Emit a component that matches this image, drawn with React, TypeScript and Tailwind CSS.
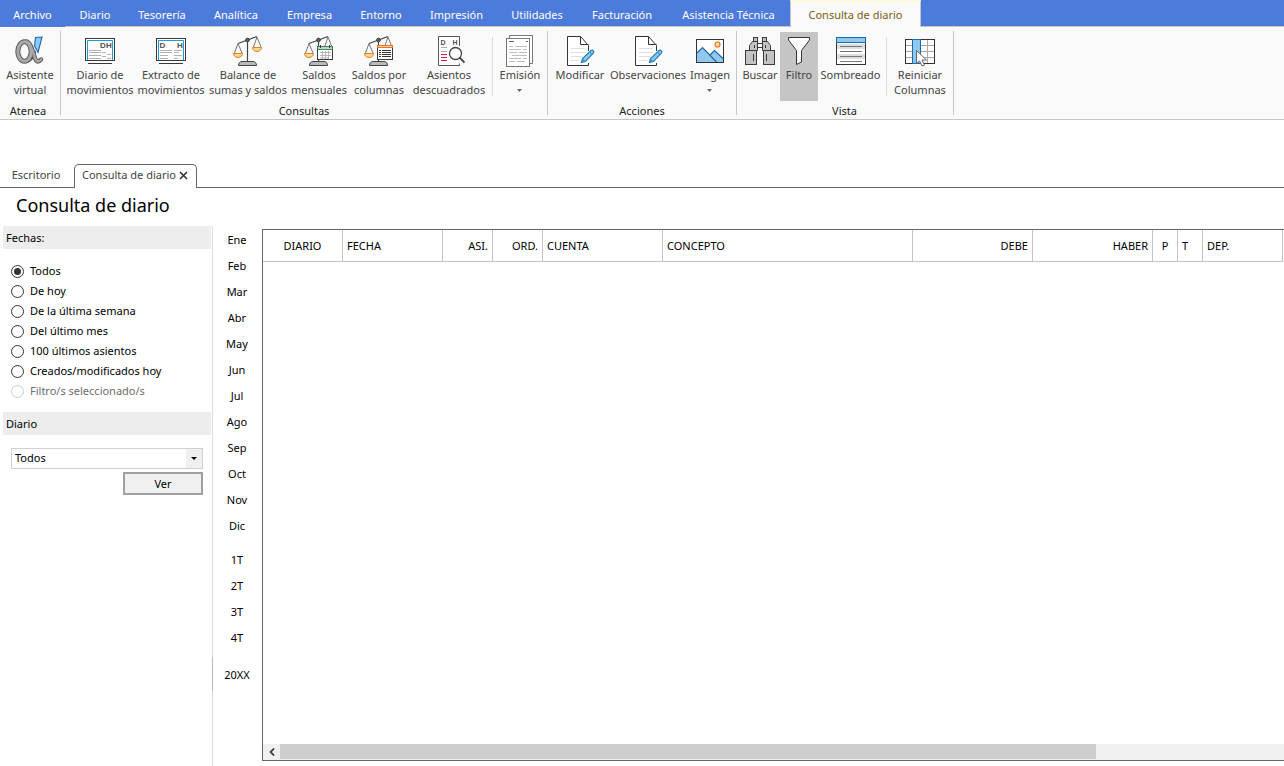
import React, { useState } from 'react';
import clsx from 'clsx';

interface RibbonItem {
  id: string;
  lines: string[];
  icon: React.ReactNode;
  width: string;
  dropdown?: boolean;
  active?: boolean;
  separatorBefore?: boolean;
}

interface RibbonGroupProps {
  title: string;
  items: RibbonItem[];
  className: string;
}

const MENU_ITEMS = [
  { label: 'Archivo', width: 'w-[65px]' },
  { label: 'Diario', width: 'w-[60px]' },
  { label: 'Tesorería', width: 'w-[74px]' },
  { label: 'Analítica', width: 'w-[74px]' },
  { label: 'Empresa', width: 'w-[73px]' },
  { label: 'Entorno', width: 'w-[70px]' },
  { label: 'Impresión', width: 'w-[81px]' },
  { label: 'Utilidades', width: 'w-[80px]' },
  { label: 'Facturación', width: 'w-[90px]' },
  { label: 'Asistencia Técnica', width: 'w-[123px]' },
];

const DATE_FILTERS = [
  { id: 'todos', label: 'Todos' },
  { id: 'hoy', label: 'De hoy' },
  { id: 'semana', label: 'De la última semana' },
  { id: 'mes', label: 'Del último mes' },
  { id: 'cien', label: '100 últimos asientos' },
  { id: 'creados', label: 'Creados/modificados hoy' },
  { id: 'filtros', label: 'Filtro/s seleccionado/s', disabled: true },
];

const MONTHS = ['Ene', 'Feb', 'Mar', 'Abr', 'May', 'Jun', 'Jul', 'Ago', 'Sep', 'Oct', 'Nov', 'Dic'];
const QUARTERS = ['1T', '2T', '3T', '4T'];

const COLUMNS = [
  { label: 'DIARIO', style: 'w-[80px] text-center' },
  { label: 'FECHA', style: 'w-[100px] text-left' },
  { label: 'ASI.', style: 'w-[50px] text-right' },
  { label: 'ORD.', style: 'w-[50px] text-right' },
  { label: 'CUENTA', style: 'w-[120px] text-left' },
  { label: 'CONCEPTO', style: 'w-[250px] text-left' },
  { label: 'DEBE', style: 'w-[120px] text-right' },
  { label: 'HABER', style: 'w-[120px] text-right' },
  { label: 'P', style: 'w-[25px] text-center' },
  { label: 'T', style: 'w-[25px] text-left' },
  { label: 'DEP.', style: 'w-[80px] text-left' },
];

const Icon = ({ children }: { children: React.ReactNode }) => (
  <svg width="32" height="32" viewBox="0 0 32 32" fill="none" aria-hidden="true" className="shrink-0">
    {children}
  </svg>
);

// Assistant logo: grey loop with a tail and a blue blade
const AlphaIcon = () => (
  <Icon>
    <path d="M21.5 2.5 L28 2 L24 17.5 L20.5 11 Z" fill="#90c8f0" stroke="#1468b4" strokeWidth="1.1" />
    <g strokeLinecap="round">
      <ellipse cx="10.5" cy="16.5" rx="6.7" ry="9.7" stroke="#5c5c5c" strokeWidth="5" />
      <path d="M13 6.5 C17 8 18.5 15 20 20 C21.5 26 23.5 28.5 27 24.5" stroke="#5c5c5c" strokeWidth="4.4" />
      <path d="M20.5 17 C19.5 21 17 25 14 26" stroke="#5c5c5c" strokeWidth="3" />
      <ellipse cx="10.5" cy="16.5" rx="6.7" ry="9.7" stroke="#a9a9a9" strokeWidth="3" />
      <path d="M13 6.5 C17 8 18.5 15 20 20 C21.5 26 23.5 28.5 27 24.5" stroke="#a9a9a9" strokeWidth="2.4" />
    </g>
  </Icon>
);

const LedgerIcon = ({ split }: { split?: boolean }) => (
  <Icon>
    <rect x="1.5" y="3.5" width="29" height="22" fill="#fff" stroke="#3a3a3a" />
    <path d="M3.5 25 V5.5 H28.5 V25" stroke="#1a9ad6" />
    <path d="M4 28.5 H28" stroke="#3a3a3a" />
    <g fontFamily="Liberation Sans, sans-serif" fontSize="8" fontWeight="700" fill="#505050">
      <text x={split ? 4.5 : 16} y="13">D</text>
      <text x="22" y="13">H</text>
    </g>
    <path
      d={
        split
          ? 'M5 15.5 H17 M5 17.5 H17 M5 20.5 H13 M5 23.5 H13 M19 15.5 H27 M19 17.5 H24 M19 20.5 H27 M19 23.5 H23'
          : 'M5 15.5 H17 M5 17.5 H17 M5 20.5 H17 M5 23.5 H17 M18 17.5 H22 M18 21.5 H22 M23 19.5 H27 M23 23.5 H27'
      }
      stroke="#b0b0b0"
    />
  </Icon>
);

const Scale = () => (
  <g>
    <path d="M15.5 7 V27" stroke="#444" strokeWidth="1.2" />
    <path d="M6 8.5 L25 1.5" stroke="#444" strokeWidth="1.3" />
    <path d="M6 8.5 L2.5 18 M6 8.5 L10 18 M25 2 L21.5 12 M25 2 L29 12" stroke="#777" />
    <path d="M1.5 18.5 H10.5 C10.5 20.5 9 22.5 6 22.5 C3 22.5 1.5 20.5 1.5 18.5 Z" fill="#ffd78c" stroke="#e8832b" />
    <path d="M20.5 12.5 H29.5 C29.5 14.5 28 16.5 25 16.5 C22 16.5 20.5 14.5 20.5 12.5 Z" fill="#ffd78c" stroke="#e8832b" />
    <circle cx="15.5" cy="5" r="1.8" fill="#666" stroke="#333" />
    <path d="M6.5 30.5 C6.5 28 8 26.5 10 26.5 H21 C23 26.5 24.5 28 24.5 30.5 Z" fill="#b9b9b9" stroke="#444" />
  </g>
);

const BalanceIcon = () => (
  <Icon>
    <Scale />
  </Icon>
);

const MonthlyIcon = () => (
  <Icon>
    <Scale />
    <rect x="14.5" y="12.5" width="15" height="12" fill="#fff" stroke="#3a3a3a" />
    <rect x="14.5" y="11.5" width="15" height="3" fill="#b4ddc3" stroke="#2f6d48" strokeWidth="0.8" />
    <path d="M17.5 10 V13 M26.5 10 V13" stroke="#3a3a3a" />
    <path d="M17 17.5 H28 M17 20.5 H28 M17 23 H25 M19.5 16 V24 M22.5 16 V24 M25.5 16 V24" stroke="#b5b5b5" />
  </Icon>
);

const ColumnsBalanceIcon = () => (
  <Icon>
    <Scale />
    <rect x="14.5" y="10.5" width="15" height="14" fill="#fff" stroke="#3a3a3a" />
    <rect x="14.5" y="10.5" width="15" height="2" fill="#ffd0a0" stroke="#e8732b" />
    <path d="M16 15.5 H18 M16 17.5 H18 M16 19.5 H18 M16 21.5 H18 M19 15.5 H28 M19 17.5 H28 M19 19.5 H28 M19 21.5 H28" stroke="#333" />
  </Icon>
);

const MismatchIcon = () => (
  <Icon>
    <path d="M26.5 11 V1.5 H5.5 V30.5 H26.5 V28.5" fill="#fff" stroke="#555" />
    <g fontFamily="Liberation Sans, sans-serif" fontSize="7" fontWeight="700" fill="#505050">
      <text x="7.5" y="10">D</text>
      <text x="19.5" y="10">H</text>
    </g>
    <path d="M8 12.5 H14 M8 16.5 H14" stroke="#b0b0b0" />
    <path d="M8 19.5 H14 M8 22.5 H14 M8 25.5 H14" stroke="#dc143c" />
    <circle cx="22.5" cy="18.5" r="6" fill="#fff" stroke="#444" strokeWidth="1.3" />
    <path d="M26.5 22.5 L31.5 27.5" stroke="#444" strokeWidth="1.8" />
  </Icon>
);

const PrintIcon = () => (
  <Icon>
    <path d="M5.5 3 V0.5 H28.5 V28.5 H26" fill="#fff" stroke="#777" />
    <rect x="2.5" y="3.5" width="23" height="28" fill="#fff" stroke="#777" />
    <path d="M5 6.5 H10 M22 6.5 H24" stroke="#666" />
    <path d="M5 11.5 H9 M11 11.5 H23 M5 14.5 H17 M19 14.5 H23 M5 17.5 H13 M15 17.5 H23 M8 20.5 H23 M5 23.5 H17 M19 23.5 H23 M5 26.5 H11 M13 26.5 H21" stroke="#bdbdbd" />
  </Icon>
);

const EditDocIcon = () => (
  <Icon>
    <path d="M24.5 16 V10.5 L16.5 1.5 H3.5 V30.5 H24.5 V28" fill="#fff" stroke="#333" />
    <path d="M16.5 1.5 V9.5 H24.5" stroke="#333" />
    <path d="M7 13.5 H21 M7 17.5 H21 M7 21.5 H18 M7 25.5 H15" stroke="#dedede" />
    <path d="M17.5 27.5 L18.5 23.5 L27 15.5 C29 14.5 30.5 16.5 29.5 18 L21.5 26.5 Z" fill="#8cc8ee" stroke="#2280c0" strokeWidth="1.2" />
    <path d="M19 24.5 L20.5 26 M17.5 27.5 L20 25 M25.5 17 L28 19.5" stroke="#2280c0" />
  </Icon>
);

const ImageIcon = () => (
  <Icon>
    <rect x="2.5" y="4.5" width="27" height="23" fill="#fff" />
    <path d="M3 18 L8.5 12.5 L16 20 L20.5 15.5 L29 23 V27 H3 Z" fill="#90c8ef" />
    <path d="M3 18 L8.5 12.5 L22.5 27 M16 20 L20.5 15.5 L29 23.5" stroke="#1d69ab" strokeWidth="1.2" />
    <circle cx="23.5" cy="9.5" r="2.5" fill="#ffd78c" stroke="#e8732b" strokeWidth="1.2" />
    <rect x="2.5" y="4.5" width="27" height="23" stroke="#333" />
  </Icon>
);

const BinocularsIcon = () => (
  <Icon>
    <g fill="#c3c3c3" stroke="#3a3a3a">
      <rect x="9.5" y="2.5" width="4" height="4" />
      <rect x="18.5" y="2.5" width="4" height="4" />
      <rect x="13.5" y="8.5" width="5" height="4" fill="#fff" />
      <path d="M5.5 15.5 V10.5 L8.5 6.5 H13.5 V15.5 Z" />
      <path d="M26.5 15.5 V10.5 L23.5 6.5 H18.5 V15.5 Z" />
      <rect x="1.5" y="15.5" width="11" height="14" />
      <rect x="19.5" y="15.5" width="11" height="14" />
    </g>
    <path d="M9.5 19 V26 M22.5 19 V26 M10.5 10 V13 M21.5 10 V13" stroke="#3a3a3a" />
  </Icon>
);

const FunnelIcon = () => (
  <Icon>
    <path d="M5.5 2.5 H26.5 V5 L18.5 15.5 V27 L13.5 29.5 V15.5 L5.5 5 Z" fill="#fff" stroke="#333" />
  </Icon>
);

const ShadingIcon = () => (
  <Icon>
    <rect x="1.5" y="2.5" width="29" height="27" fill="#fff" stroke="#333" />
    <path d="M2 9 H30 V14 H2 Z M2 19 H30 V24 H2 Z" fill="#dedede" />
    <path d="M5 11.5 H27 M5 16.5 H27 M5 21.5 H27 M5 26.5 H27" stroke="#777" />
    <rect x="1.5" y="2.5" width="29" height="5" fill="#90c8ef" stroke="#1d69ab" />
  </Icon>
);

const ResetColumnsIcon = () => (
  <Icon>
    <rect x="1.5" y="4.5" width="29" height="24" fill="#fff" />
    <path d="M2 10.5 H30 M2 16.5 H30 M2 22.5 H30 M23.5 5 V28" stroke="#aaa" />
    <rect x="1.5" y="4.5" width="29" height="24" stroke="#333" />
    <rect x="8.5" y="4.5" width="8" height="24" fill="#90c8ef" stroke="#1d69ab" />
    <path d="M12.5 15.5 V28.5 L15.5 26 L18 31 L20.5 30 L18 25 H22.5 Z" fill="#fff" stroke="#666" />
  </Icon>
);

const ATENEA: RibbonItem[] = [
  { id: 'asistente', lines: ['Asistente', 'virtual'], icon: <AlphaIcon />, width: 'w-[60px]' },
];

const CONSULTAS: RibbonItem[] = [
  { id: 'diario', lines: ['Diario de', 'movimientos'], icon: <LedgerIcon />, width: 'w-[70px]' },
  { id: 'extracto', lines: ['Extracto de', 'movimientos'], icon: <LedgerIcon split />, width: 'w-[72px]' },
  { id: 'balance', lines: ['Balance de', 'sumas y saldos'], icon: <BalanceIcon />, width: 'w-[82px]' },
  { id: 'mensuales', lines: ['Saldos', 'mensuales'], icon: <MonthlyIcon />, width: 'w-[60px]' },
  { id: 'columnas', lines: ['Saldos por', 'columnas'], icon: <ColumnsBalanceIcon />, width: 'w-[60px]' },
  { id: 'asientos', lines: ['Asientos', 'descuadrados'], icon: <MismatchIcon />, width: 'w-[80px]' },
  { id: 'emision', lines: ['Emisión'], icon: <PrintIcon />, width: 'w-[48px]', dropdown: true, separatorBefore: true },
];

const ACCIONES: RibbonItem[] = [
  { id: 'modificar', lines: ['Modificar'], icon: <EditDocIcon />, width: 'w-[56px]' },
  { id: 'observaciones', lines: ['Observaciones'], icon: <EditDocIcon />, width: 'w-[80px]' },
  { id: 'imagen', lines: ['Imagen'], icon: <ImageIcon />, width: 'w-[44px]', dropdown: true },
];

const VISTA: RibbonItem[] = [
  { id: 'buscar', lines: ['Buscar'], icon: <BinocularsIcon />, width: 'w-[40px]' },
  { id: 'filtro', lines: ['Filtro'], icon: <FunnelIcon />, width: 'w-[38px]', active: true },
  { id: 'sombreado', lines: ['Sombreado'], icon: <ShadingIcon />, width: 'w-[65px]' },
  { id: 'reiniciar', lines: ['Reiniciar', 'Columnas'], icon: <ResetColumnsIcon />, width: 'w-[60px]', separatorBefore: true },
];

const RibbonGroup: React.FC<RibbonGroupProps> = ({ title, items, className }) => (
  <section className="flex pt-1">
    <div className={clsx('flex flex-col', className)}>
      <div className="flex pt-px">
        {items.map((item) => (
          <React.Fragment key={item.id}>
            {item.separatorBefore && <div className="mx-[3px] mt-[5px] h-[59px] w-px bg-[#dcdcdc]" />}
            <button
              type="button"
              className={clsx(
                'flex h-[69px] shrink-0 flex-col items-center pt-[3px] leading-[15px] whitespace-nowrap text-[#444]',
                item.width,
                item.active && 'bg-[#c5c5c5]'
              )}
            >
              {item.icon}
              {item.lines.map((line) => (
                <span key={line}>{line}</span>
              ))}
              {item.dropdown && (
                <svg width="6" height="3" viewBox="0 0 6 3" className="mt-[7px]" aria-hidden="true">
                  <path d="M0 0 H5 L2.5 3 Z" fill="#666" />
                </svg>
              )}
            </button>
          </React.Fragment>
        ))}
      </div>
      <h2 className="pt-[3px] pr-1 text-center leading-[14px] text-[#222]">{title}</h2>
    </div>
    <div className="h-[84px] w-px bg-[#c6c6c6]" />
  </section>
);

const PanelHeader = ({ children }: { children: React.ReactNode }) => (
  <h3 className="ml-[3px] mr-px h-[23px] bg-[#ededed] px-[3px] leading-[23px]">{children}</h3>
);

const PeriodButton = ({ label }: { label: string }) => (
  <button type="button" className="h-[26px] w-full text-center">
    {label}
  </button>
);

export default function App() {
  const [dateFilter, setDateFilter] = useState('todos');

  return (
    <div className="flex h-screen flex-col overflow-hidden bg-white font-['Noto_Sans','Liberation_Sans',sans-serif] text-[11px] text-black">
      {/* Menu bar */}
      <nav className="flex h-[27px] shrink-0 bg-[#4d7bdb] text-white">
        {MENU_ITEMS.map(({ label, width }, index) => (
          <button
            key={label}
            type="button"
            className={clsx('shrink-0 text-center whitespace-nowrap', width, index > 0 ? 'border-b border-[#c6c6c6] pt-1' : 'pt-[3px]')}
          >
            {label}
          </button>
        ))}
        <button
          type="button"
          className="w-[131px] shrink-0 border-x border-t-2 border-x-[#c6c6c6] border-t-[#fff8dc] bg-[#fafafa] pt-px text-center whitespace-nowrap text-[#7d5c14]"
        >
          Consulta de diario
        </button>
        <div className="flex-1 border-b border-[#c6c6c6]" />
      </nav>

      {/* Ribbon */}
      <div className="flex h-[93px] shrink-0 border-b border-[#c6c6c6] bg-[#fafafa]">
        <RibbonGroup title="Atenea" items={ATENEA} className="w-[60px]" />
        <RibbonGroup title="Consultas" items={CONSULTAS} className="w-[486px] pl-[4px]" />
        <RibbonGroup title="Acciones" items={ACCIONES} className="w-[188px] pl-[4px]" />
        <RibbonGroup title="Vista" items={VISTA} className="w-[216px] pl-[3px]" />
      </div>

      {/* Document tabs */}
      <div className="mt-11 flex h-6 shrink-0 text-[#444]">
        <button type="button" className="w-[74px] border-b border-[#666] pr-[2px] text-center">
          Escritorio
        </button>
        <div className="flex w-[123px] items-center gap-[3px] rounded-t-[5px] border border-b-0 border-[#666] pb-[2px] pl-[7px] whitespace-nowrap">
          <button type="button">Consulta de diario</button>
          <button type="button" aria-label="Cerrar">
            <svg width="9" height="9" viewBox="0 0 9 9" aria-hidden="true">
              <path d="M1 1 L8 8 M8 1 L1 8" stroke="#333" strokeWidth="1.6" />
            </svg>
          </button>
        </div>
        <div className="flex-1 border-b border-[#666]" />
      </div>

      <h1 className="h-[38px] shrink-0 pl-4 text-[18px] leading-[34px]">Consulta de diario</h1>

      <main className="flex min-h-0 flex-1">
        {/* Filters */}
        <aside className="flex w-[212px] shrink-0 flex-col">
          <PanelHeader>Fechas:</PanelHeader>
          <fieldset aria-label="Fechas" className="flex flex-col pt-3 pb-[11px] pl-[11px]">
            {DATE_FILTERS.map(({ id, label, disabled }) => (
              <label key={id} className={clsx('flex h-5 items-center gap-[6px]', disabled && 'text-[#6d6d6d]')}>
                <input
                  type="radio"
                  name="fechas"
                  checked={dateFilter === id}
                  disabled={disabled}
                  onChange={() => setDateFilter(id)}
                  className="size-[13px] appearance-none rounded-full border border-[#333] bg-white checked:bg-[#333] checked:bg-clip-content checked:p-[2px] disabled:border-[#ccc]"
                />
                {label}
              </label>
            ))}
          </fieldset>
          <PanelHeader>
            <label htmlFor="diario">Diario</label>
          </PanelHeader>
          <div className="mt-[13px] ml-[11px] mr-[9px] flex flex-col items-end gap-[3px]">
            <div className="relative w-full">
              <select id="diario" className="block h-[21px] w-full appearance-none border border-[#d0d0d0] bg-white pl-[3px]">
                <option>Todos</option>
              </select>
              <span className="pointer-events-none absolute inset-y-px right-px flex w-4 items-center justify-center bg-[#f0f0f0]">
                <svg width="6" height="3" viewBox="0 0 6 3" aria-hidden="true">
                  <path d="M0 0 H6 L3 3 Z" fill="#000" />
                </svg>
              </span>
            </div>
            <button type="button" className="h-[23px] w-20 border-2 border-[#a0a0a0] bg-[#f0f0f0] leading-[19px]">
              Ver
            </button>
          </div>
        </aside>

        {/* Splitter */}
        <div className="flex w-px shrink-0 flex-col bg-[#dcdcdc] pt-[431px]">
          <div className="h-[34px] bg-[#b8b8b8]" />
        </div>

        {/* Periods */}
        <div className="flex w-[49px] shrink-0 flex-col pt-px pr-px">
          {MONTHS.map((month) => (
            <PeriodButton key={month} label={month} />
          ))}
          <div className="pt-2 pb-[11px]">
            {QUARTERS.map((quarter) => (
              <PeriodButton key={quarter} label={quarter} />
            ))}
          </div>
          <PeriodButton label="20XX" />
        </div>

        {/* Entries grid */}
        <div className="mt-[3px] mb-[5px] flex min-w-0 flex-1 flex-col overflow-hidden border border-r-0 border-[#666]">
          <div className="min-h-0 flex-1 overflow-hidden">
            <table className="w-[1020px] table-fixed border-separate border-spacing-0">
              <thead>
                <tr>
                  {COLUMNS.map(({ label, style }) => (
                    <th key={label} className={clsx('h-8 border-r border-b border-[#c3c3c3] px-1 pt-[2px] font-normal', style)}>
                      {label}
                    </th>
                  ))}
                </tr>
              </thead>
              <tbody />
            </table>
          </div>
          <div className="flex h-4 shrink-0 bg-[#f0f0f0]">
            <button type="button" aria-label="Desplazar a la izquierda" className="flex w-[17px] items-center justify-center">
              <svg width="6" height="8" viewBox="0 0 6 8" fill="none" aria-hidden="true">
                <path d="M5 0.5 L1.5 4 L5 7.5" stroke="#444" strokeWidth="1.8" />
              </svg>
            </button>
            <div className="mb-px w-4/5 max-w-[816px] bg-[#cdcdcd]" />
          </div>
        </div>
      </main>
    </div>
  );
}
